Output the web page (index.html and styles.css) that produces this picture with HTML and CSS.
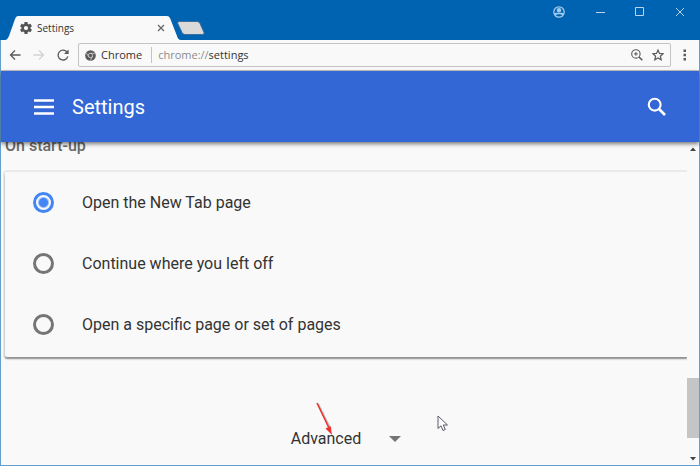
FILE: index.html
```html
<!DOCTYPE html>
<html lang="en-GB">
<head>
<meta charset="utf-8">
<title>Settings</title>
<link rel="stylesheet" href="styles.css">
</head>
<body>
<header class="titlebar">
  <div class="tab">
    <svg class="tab-shape" viewBox="0 0 176 24" preserveAspectRatio="none" aria-hidden="true"><path d="M0 24C2 24 3 22 4 20L10 3Q11 0 13 0H162Q164 0 165 2L172 20Q173 24 176 24Z"/></svg>
    <svg class="gear" viewBox="2 2 20 20" aria-hidden="true"><path d="M19.43 12.98c.04-.32.07-.64.07-.98s-.03-.66-.07-.98l2.11-1.65c.19-.15.24-.42.12-.64l-2-3.46c-.12-.22-.39-.3-.61-.22l-2.49 1c-.52-.4-1.08-.73-1.69-.98l-.38-2.65C14.46 2.18 14.25 2 14 2h-4c-.25 0-.46.18-.49.42l-.38 2.65c-.61.25-1.17.59-1.69.98l-2.49-1c-.23-.09-.49 0-.61.22l-2 3.46c-.13.22-.07.49.12.64l2.11 1.65c-.04.32-.07.65-.07.98s.03.66.07.98l-2.11 1.65c-.19.15-.24.42-.12.64l2 3.46c.12.22.39.3.61.22l2.49-1c.52.4 1.08.73 1.69.98l.38 2.65c.03.24.24.42.49.42h4c.25 0 .46-.18.49-.42l.38-2.65c.61-.25 1.17-.59 1.69-.98l2.49 1c.23.09.49 0 .61-.22l2-3.46c.12-.22.07-.49-.12-.64l-2.11-1.65zM12 15.500c-1.930 0-3.500-1.570-3.500-3.500s1.570-3.500 3.500-3.500 3.500 1.570 3.500 3.500-1.570 3.500-3.500 3.500z"/></svg>
    <span class="tab-title">Settings</span>
    <button class="icon-button tab-close" aria-label="Close tab"><svg width="8" height="8" viewBox="0 0 8 8"><path d="M1 1l6 6M7 1L1 7" stroke="#666" stroke-width="1.300"/></svg></button>
  </div>
  <button class="icon-button new-tab" aria-label="New tab"><svg width="28" height="14" viewBox="0 0 28 14"><path d="M2 .5H20Q22 .5 23 2.500L27 11.500Q27.500 13.500 25.500 13.500H8Q6 13.500 5 11.500L.8 2.500Q.3 .5 2 .5Z" fill="#dadada" stroke="#3d6f9c"/></svg></button>
  <div class="window-controls">
    <button class="icon-button" aria-label="User"><svg width="12" height="12" viewBox="0 0 12 12"><circle cx="6" cy="6" r="5.200" fill="none" stroke="#a4cbed" stroke-width="1.300"/><circle cx="6" cy="4.300" r="2.200" fill="#a4cbed"/><path d="M1.300 7C3 6.500 9 6.500 10.700 7L9.500 9.500C8 7.800 4 7.800 2.500 9.500Z" fill="#a4cbed"/></svg></button>
    <button class="icon-button" aria-label="Minimise"><svg width="10" height="10" viewBox="0 0 10 10"><path d="M1 5.500h9" stroke="#b9d5ec"/></svg></button>
    <button class="icon-button" aria-label="Maximise"><svg width="10" height="10" viewBox="0 0 10 10"><path d="M.5 .5h8v8h-8z" fill="none" stroke="#b9d5ec"/></svg></button>
    <button class="icon-button" aria-label="Close"><svg width="10" height="10" viewBox="0 0 10 10"><path d="M1 1l8 8M9 1L1 9" stroke="#b9d5ec"/></svg></button>
  </div>
</header>
<div class="window">
  <nav class="toolbar">
    <button class="icon-button" aria-label="Back"><svg width="12" height="12" viewBox="0 0 12 12"><path d="M11.500 6H1.500M6 1.500L1.500 6 6 10.500" fill="none" stroke="#5a5a5a" stroke-width="1.300"/></svg></button>
    <button class="icon-button" aria-label="Forward" disabled><svg width="12" height="12" viewBox="0 0 12 12"><path d="M.5 6H10.500M6 1.500L10.500 6 6 10.500" fill="none" stroke="#d4d4d4" stroke-width="1.300"/></svg></button>
    <button class="icon-button" aria-label="Reload"><svg width="12" height="12" viewBox="0 0 12 12"><path d="M10 3.200A4.900 4.900 0 1 0 10.800 7.300" fill="none" stroke="#5a5a5a" stroke-width="1.300"/><path d="M11.600 .4V5H7Z" fill="#5a5a5a"/></svg></button>
    <div class="address">
      <svg width="11" height="11" viewBox="0 0 12 12" aria-hidden="true"><circle cx="6" cy="6" r="5.800" fill="#5a5a5a"/><circle cx="6" cy="6" r="2.400" fill="none" stroke="#f9f9f9" stroke-width=".7"/><path d="M6 3.600h5.200M3.900 7.200L1.300 3M8.100 7.200L5.700 11.600" stroke="#f9f9f9" stroke-width=".6"/></svg>
      <span class="origin">Chrome</span>
      <span class="url"><span class="scheme">chrome://</span>settings</span>
      <button class="icon-button" aria-label="Zoom"><svg width="12" height="12" viewBox="0 0 12 12"><circle cx="4.900" cy="4.900" r="4.200" fill="none" stroke="#5a5a5a" stroke-width="1.100"/><path d="M4.900 3v3.800M3 4.900h3.800" stroke="#5a5a5a"/><path d="M8 8l3.300 3.300" stroke="#5a5a5a" stroke-width="1.600"/></svg></button>
      <button class="icon-button" aria-label="Bookmark this page"><svg width="12" height="12" viewBox="0 0 12 12"><path d="M6 1.100l1.450 3.300 3.650.3-2.750 2.500.85 3.600L6 8.900l-3.200 1.900.85-3.600L.9 4.700l3.650-.3z" fill="none" stroke="#5a5a5a" stroke-width="1.200"/></svg></button>
    </div>
    <button class="icon-button" aria-label="Menu"><svg width="4" height="12" viewBox="0 0 4 12"><path d="M.5 .5h2.500v2.500h-2.500zM.5 4.750h2.500v2.500h-2.500zM.5 9h2.500v2.500h-2.500z" fill="#5a5a5a"/></svg></button>
  </nav>
  <header class="appbar">
    <button class="icon-button" aria-label="Main menu"><svg width="20" height="16" viewBox="0 0 20 16"><path d="M0 1.500h20M0 8h20M0 14.500h20" stroke="#fff" stroke-width="2.600"/></svg></button>
    <h1>Settings</h1>
    <button class="icon-button" aria-label="Search settings"><svg width="20" height="20" viewBox="0 0 20 20"><circle cx="7.700" cy="7.700" r="5.900" fill="none" stroke="#fff" stroke-width="2.100"/><path d="M12 12l6 6" stroke="#fff" stroke-width="2.600"/></svg></button>
  </header>
  <div class="viewport">
    <main>
      <h2 id="startup">On start-up</h2>
      <div class="card" role="radiogroup" aria-labelledby="startup">
        <label class="option"><input type="radio" name="startup" checked>Open the New Tab page</label>
        <label class="option"><input type="radio" name="startup">Continue where you left off</label>
        <label class="option"><input type="radio" name="startup">Open a specific page or set of pages</label>
      </div>
      <div class="advanced-row">
        <button class="advanced">Advanced<svg width="12" height="6" viewBox="0 0 12 6" aria-hidden="true"><path d="M0 0h12L6 6z" fill="#757575"/></svg>
          <svg class="pointer-arrow" width="22" height="38" viewBox="0 0 22 38" aria-hidden="true"><path d="M4 4l13 26" stroke="#bbb" stroke-width="2"/><path d="M3 3l12 25" stroke="#f0302c" stroke-width="1.500"/><path d="M11.500 28.500l5-2.500 1.500 9z" fill="#f0302c"/></svg>
          <svg class="cursor" width="12" height="18" viewBox="0 0 12 18" aria-hidden="true"><path d="M1 1v12.500l3-2.700 2 4.700 2.300-1-2-4.500h4.200z" fill="#fff" stroke="#5a5a66"/></svg>
        </button>
      </div>
    </main>
    <div class="scrollbar" aria-hidden="true">
      <svg width="8" height="4" viewBox="0 0 8 4"><path d="M1 4L4 .5 7 4z" fill="#444"/></svg>
      <div class="thumb"></div>
      <svg width="8" height="4" viewBox="0 0 8 4"><path d="M1 0L4 3.500 7 0z" fill="#444"/></svg>
    </div>
  </div>
</div>
</body>
</html>
```
FILE: styles.css
```css
* {
  box-sizing: border-box;
}

body {
  margin: 0;
  min-height: 100vh;
  display: flex;
  flex-direction: column;
  background: #f9f9f9;
  color: #333;
  font-family: Roboto, "Liberation Sans", sans-serif;
  font-size: 16px;
}

svg {
  display: block;
  flex: none;
}

.icon-button {
  display: block;
  flex: none;
  padding: 0;
  border: 0;
  background: none;
}

.titlebar {
  display: flex;
  height: 40px;
  padding: 16px 15px 0 5px;
  background: #0063b1;
}

.tab {
  position: relative;
  display: flex;
  align-items: center;
  width: 176px;
  height: 24px;
  padding: 0 16px 0 15px;
  font-family: "Open Sans", sans-serif;
  font-size: 10px;
}

.tab-shape {
  position: absolute;
  inset: 0;
  width: 100%;
  height: 100%;
  fill: #f9f9f9;
}

.gear {
  position: relative;
  width: 12px;
  height: 12px;
  fill: #555;
}

.tab-title {
  position: relative;
  flex: 1;
  padding-left: 5px;
}

.tab-close {
  position: relative;
}

.new-tab {
  align-self: flex-start;
  margin-top: 5px;
  margin-left: -4px;
}

.window-controls {
  display: flex;
  align-items: center;
  gap: 30px;
  height: 24px;
  margin-top: -16px;
  margin-left: auto;
}

.window {
  flex: 1;
  display: flex;
  flex-direction: column;
  border: solid #629fce;
  border-width: 0 1px 1px;
}

.toolbar {
  display: flex;
  align-items: center;
  gap: 12px;
  height: 31px;
  padding: 0 12px 0 8px;
  border-bottom: 1px solid #c3c3c3;
}

.address {
  flex: 1;
  display: flex;
  align-items: center;
  gap: 9px;
  height: 24px;
  margin-left: -3px;
  padding: 0 6px;
  border: 1px solid #c3c3c3;
  border-radius: 2px;
  font-family: "Open Sans", sans-serif;
  font-size: 11px;
  line-height: 16px;
}

.origin {
  margin-left: -4px;
}

.url {
  flex: 1;
  padding-left: 6px;
  border-left: 1px solid #c3c3c3;
}

.scheme {
  color: #8c8c8c;
}

.appbar {
  position: relative;
  z-index: 1;
  display: flex;
  align-items: center;
  gap: 18px;
  height: 71px;
  padding: 0 32px 0 33px;
  background: #3367d6;
  color: #fff;
  box-shadow: 0 2px 4px rgba(0, 0, 0, 0.5);
}

.appbar h1 {
  flex: 1;
  margin: 0;
  font-size: 20px;
  font-weight: 400;
}

.viewport {
  flex: 1;
  display: flex;
}

main {
  flex: 1;
  min-width: 0;
  overflow: hidden;
  padding-left: 4px;
}

h2 {
  margin: -6px 0 16px;
  color: #6a6a6a;
  font-size: 16px;
  font-weight: 500;
  line-height: 20px;
}

.card {
  padding-bottom: 2px;
  border-radius: 2px 0 0 2px;
  box-shadow: 0 2px 2px rgba(0, 0, 0, 0.4), 0 0 0 2px rgba(0, 0, 0, 0.06);
}

.option {
  display: flex;
  align-items: center;
  gap: 28px;
  height: 61px;
  padding-left: 28px;
}

.option input {
  appearance: none;
  width: 21px;
  height: 21px;
  margin: 0;
  border: 3px solid #757575;
  border-radius: 50%;
}

.option input:checked {
  border-color: #4285f4;
  background: radial-gradient(circle, #4285f4 4px, transparent 6px);
}

.advanced-row {
  display: flex;
  justify-content: center;
  padding-top: 70px;
}

.advanced {
  position: relative;
  display: flex;
  align-items: center;
  gap: 28px;
  padding: 0;
  border: 0;
  background: none;
  color: #333;
  font: inherit;
  line-height: 24px;
}

.pointer-arrow {
  position: absolute;
  left: 23px;
  top: -27px;
}

.cursor {
  position: absolute;
  left: 146px;
  top: -12px;
}

.scrollbar {
  display: flex;
  flex-direction: column;
  align-items: center;
  width: 12px;
  padding: 5px 0 4px;
}

.thumb {
  width: 100%;
  height: 60px;
  margin-top: auto;
  margin-bottom: 19px;
  background: #c5c5c5;
}
```
